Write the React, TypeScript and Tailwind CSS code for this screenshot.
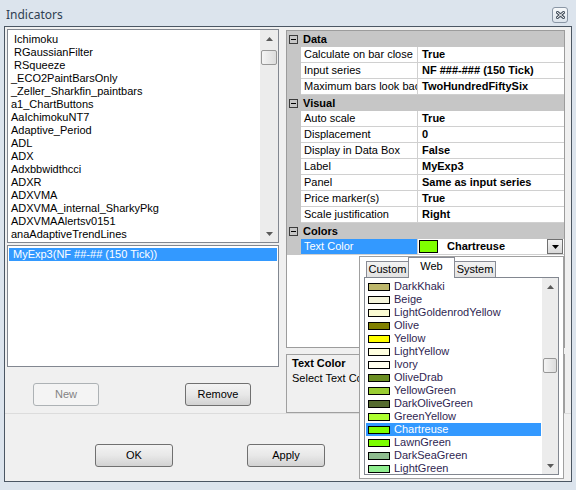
import React from 'react';

const indicators = [
  ' Ichimoku',
  ' RGaussianFilter',
  ' RSqueeze',
  '_ECO2PaintBarsOnly',
  '_Zeller_Sharkfin_paintbars',
  'a1_ChartButtons',
  'AaIchimokuNT7',
  'Adaptive_Period',
  'ADL',
  'ADX',
  'Adxbbwidthcci',
  'ADXR',
  'ADXVMA',
  'ADXVMA_internal_SharkyPkg',
  'ADXVMAAlertsv0151',
  'anaAdaptiveTrendLines',
];

type GridRow =
  | { category: string }
  | { name: string; value: string };

const gridRows: GridRow[] = [
  { category: 'Data' },
  { name: 'Calculate on bar close', value: 'True' },
  { name: 'Input series', value: 'NF ###-### (150 Tick)' },
  { name: 'Maximum bars look back', value: 'TwoHundredFiftySix' },
  { category: 'Visual' },
  { name: 'Auto scale', value: 'True' },
  { name: 'Displacement', value: '0' },
  { name: 'Display in Data Box', value: 'False' },
  { name: 'Label', value: 'MyExp3' },
  { name: 'Panel', value: 'Same as input series' },
  { name: 'Price marker(s)', value: 'True' },
  { name: 'Scale justification', value: 'Right' },
  { category: 'Colors' },
];

const webColors = [
  { name: 'DarkKhaki', hex: '#bdb76b' },
  { name: 'Beige', hex: '#f5f5dc' },
  { name: 'LightGoldenrodYellow', hex: '#fafad2' },
  { name: 'Olive', hex: '#808000' },
  { name: 'Yellow', hex: '#ffff00' },
  { name: 'LightYellow', hex: '#ffffe0' },
  { name: 'Ivory', hex: '#fffff0' },
  { name: 'OliveDrab', hex: '#6b8e23' },
  { name: 'YellowGreen', hex: '#9acd32' },
  { name: 'DarkOliveGreen', hex: '#556b2f' },
  { name: 'GreenYellow', hex: '#adff2f' },
  { name: 'Chartreuse', hex: '#7fff00' },
  { name: 'LawnGreen', hex: '#7cfc00' },
  { name: 'DarkSeaGreen', hex: '#8fbc8f' },
  { name: 'LightGreen', hex: '#90ee90' },
];

function Arrow({ down = false }: { down?: boolean }) {
  return (
    <svg width="7" height="4" viewBox="0 0 7 4" className={down ? 'rotate-180' : ''}>
      <path d="M3.5 0 L7 4 L0 4 Z" fill="#5a5a5a" />
    </svg>
  );
}

function ScrollBar({ thumbTop, width }: { thumbTop: string; width: string }) {
  return (
    <div className={`flex flex-col items-center bg-[#ececec] ${width}`}>
      <div className="flex h-[17px] w-full items-center justify-center">
        <Arrow />
      </div>
      <div
        className={`h-[15px] w-[calc(100%-2px)] rounded-[2px] border border-[#979797] bg-linear-to-r from-[#f4f4f4] to-[#dcdcdc] ${thumbTop}`}
      />
      <div className="mt-auto flex h-[17px] w-full items-center justify-center">
        <Arrow down />
      </div>
    </div>
  );
}

const winButton =
  'h-[23px] rounded-[3px] border border-[#707070] bg-linear-to-b from-[#f3f3f3] via-[#e8e8e8] to-[#d2d2d2] text-[11px] text-black';

function MinusBox() {
  return (
    <span className="ml-[2px] flex h-[9px] w-[9px] items-center justify-center border border-[#3c3c3c]">
      <span className="h-[1px] w-[5px] bg-black" />
    </span>
  );
}

export default function App() {
  return (
    <div className="relative h-[490px] w-[576px] overflow-hidden bg-[#dce4ed] font-['Liberation_Sans',Arial,sans-serif] text-[11px] text-black">
      {/* title bar */}
      <div className="flex h-[26px] items-center justify-between pl-[6px] pr-[8px] pt-[4px]">
        <span className="font-['Noto_Sans',sans-serif] text-[12px] text-[#2f3f52]">Indicators</span>
        <button className="flex h-[16px] w-[16px] items-center justify-center rounded-[3px] border border-[#8a96a5] bg-linear-to-b from-[#f7f9fb] to-[#dde4ec]">
          <svg width="9" height="8" viewBox="0 0 9 8">
            <path d="M1.5 1.5 L7.5 6.5 M7.5 1.5 L1.5 6.5" stroke="#4a5562" strokeWidth="3" strokeLinecap="square" />
            <path d="M1.5 1.5 L7.5 6.5 M7.5 1.5 L1.5 6.5" stroke="#ffffff" strokeWidth="1" strokeLinecap="square" />
          </svg>
        </button>
      </div>

      {/* client area */}
      <div className="mx-[4px] flex h-[456px] flex-col border border-[#4b5663] bg-[#f0f0f0]">
        <div className="flex h-[386px]">
          {/* indicator lists */}
          <div className="flex w-[276px] flex-col pl-[2px] pt-[2px]">
            <div className="flex h-[214px] w-[272px] border border-[#828790] bg-white">
              <div className="flex-1 overflow-hidden pt-[3px]">
                {indicators.map((name) => (
                  <div key={name} className="h-[13px] whitespace-pre pl-[3px] leading-[13px]">
                    {name}
                  </div>
                ))}
              </div>
              <ScrollBar thumbTop="mt-[3px]" width="w-[18px]" />
            </div>

            <div className="mt-[2px] h-[122px] w-[272px] border border-[#828790] bg-white px-[1px] pt-[2px]">
              <div className="h-[13px] bg-[#3399ff] pl-[4px] leading-[13px] text-white">
                MyExp3(NF ##-## (150 Tick))
              </div>
            </div>

            <div className="mt-[16px] flex">
              <button className="ml-[26px] h-[23px] w-[66px] rounded-[3px] border border-[#adb2b5] bg-[#f4f4f4] text-[11px] text-[#838383]">
                New
              </button>
              <button className={`ml-[86px] w-[66px] ${winButton}`}>Remove</button>
            </div>
          </div>

          {/* property grid + help */}
          <div className="ml-[5px] flex w-[279px] flex-col pt-[3px]">
            <div className="h-[318px] border border-[#9c9c9c] bg-white">
              {gridRows.map((row, i) =>
                'category' in row ? (
                  <div key={i} className="flex h-[16px] items-center bg-[#c6c6c6]">
                    <MinusBox />
                    <span className="ml-[5px] font-bold">{row.category}</span>
                  </div>
                ) : (
                  <div key={i} className="flex h-[16px]">
                    <div className="w-[14px] bg-[#c6c6c6]" />
                    <div className="w-[117px] overflow-hidden whitespace-nowrap border-b border-r border-[#d0d0d0] pl-[3px] leading-[15px]">
                      {row.name}
                    </div>
                    <div className="flex-1 overflow-hidden whitespace-nowrap border-b border-[#d0d0d0] pl-[4px] font-bold leading-[15px]">
                      {row.value}
                    </div>
                  </div>
                ),
              )}
              <div className="flex h-[16px]">
                <div className="w-[14px] bg-[#c6c6c6]" />
                <div className="w-[117px] border-b border-r border-[#d0d0d0] bg-[#3399ff] pl-[3px] leading-[15px] text-white">
                  Text Color
                </div>
                <div className="flex flex-1 items-center border-b border-[#d0d0d0]">
                  <span className="ml-[1px] h-[13px] w-[19px] border border-black bg-[#7fff00]" />
                  <span className="ml-[9px] font-bold">Chartreuse</span>
                  <span className="ml-auto mr-[1px] flex h-[15px] w-[16px] items-center justify-center border border-[#707070] bg-linear-to-b from-[#f4f4f4] to-[#d8d8d8]">
                    <svg width="7" height="4" viewBox="0 0 7 4">
                      <path d="M0 0 L7 0 L3.5 4 Z" fill="#000" />
                    </svg>
                  </span>
                </div>
              </div>
            </div>

            <div className="mt-[6px] h-[59px] border border-[#a0a0a0] px-[5px] pt-[1px] leading-[15px]">
              <div className="font-bold">Text Color</div>
              <div>Select Text Color</div>
            </div>
          </div>
        </div>

        {/* dialog buttons */}
        <div className="flex flex-1 border-t border-[#dcdcdc] pt-[30px]">
          <button className={`ml-[90px] w-[78px] ${winButton}`}>OK</button>
          <button className={`ml-[74px] w-[78px] ${winButton}`}>Apply</button>
        </div>
      </div>

      {/* colour picker drop-down */}
      <div className="absolute left-[359px] top-[256px] h-[223px] w-[205px] border border-[#a0a0a0] bg-white">
        <div className="relative z-10 flex h-[20px] items-end pl-[6px]">
          <div className="h-[16px] w-[43px] border border-b-0 border-[#898c95] bg-linear-to-b from-[#f3f3f3] to-[#e2e2e2] text-center leading-[15px]">
            Custom
          </div>
          <div className="-mb-px -ml-px h-[21px] w-[47px] border border-b-0 border-[#898c95] bg-white text-center leading-[17px]">
            Web
          </div>
          <div className="-ml-px h-[16px] w-[42px] border border-b-0 border-[#898c95] bg-linear-to-b from-[#f3f3f3] to-[#e2e2e2] text-center leading-[15px]">
            System
          </div>
        </div>
        <div className="ml-[4px] flex h-[198px] w-[195px] border border-[#828790] bg-white">
          <div className="flex-1 overflow-hidden pl-[1px] pt-[2px] text-[#2f1f52]">
            {webColors.map((c) => {
              const selected = c.name === 'Chartreuse';
              return (
                <div
                  key={c.name}
                  className={`mr-[1px] flex h-[13px] items-center pl-[2px] ${selected ? 'bg-[#3399ff] text-white' : ''}`}
                >
                  <span className="h-[8px] w-[22px] border border-black" style={{ backgroundColor: c.hex }} />
                  <span className="ml-[4px] leading-[13px]">{c.name}</span>
                </div>
              );
            })}
          </div>
          <ScrollBar thumbTop="mt-[63px]" width="w-[16px]" />
        </div>
      </div>
    </div>
  );
}
